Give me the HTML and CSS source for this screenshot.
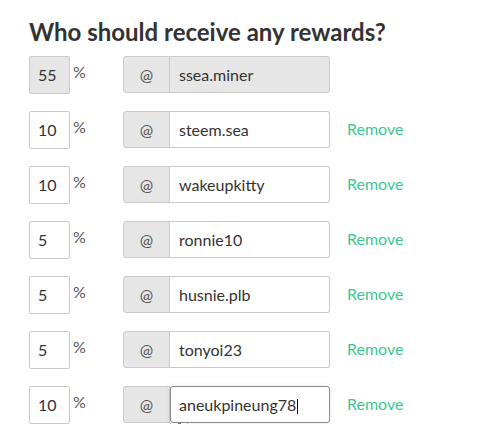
FILE: index.html
```html
<!DOCTYPE html>
<html>
<head>
<meta charset="utf-8">
<link rel="stylesheet" href="styles.css">
</head>
<body>
<div class="page">
  <h4 class="title">Who should receive any rewards?</h4>
  <div class="rows">
    <div class="row">
      <div class="pct disabled">55</div><span class="sign">%</span>
      <div class="group"><span class="addon">@</span><div class="name disabled">ssea.miner</div></div>
    </div>
    <div class="row">
      <div class="pct">10</div><span class="sign">%</span>
      <div class="group"><span class="addon">@</span><div class="name">steem.sea</div></div>
      <a class="remove">Remove</a>
    </div>
    <div class="row">
      <div class="pct">10</div><span class="sign">%</span>
      <div class="group"><span class="addon">@</span><div class="name">wakeupkitty</div></div>
      <a class="remove">Remove</a>
    </div>
    <div class="row">
      <div class="pct">5</div><span class="sign">%</span>
      <div class="group"><span class="addon">@</span><div class="name">ronnie10</div></div>
      <a class="remove">Remove</a>
    </div>
    <div class="row">
      <div class="pct">5</div><span class="sign">%</span>
      <div class="group"><span class="addon">@</span><div class="name">husnie.plb</div></div>
      <a class="remove">Remove</a>
    </div>
    <div class="row">
      <div class="pct">5</div><span class="sign">%</span>
      <div class="group"><span class="addon">@</span><div class="name">tonyoi23</div></div>
      <a class="remove">Remove</a>
    </div>
    <div class="row">
      <div class="pct">10</div><span class="sign">%</span>
      <div class="group"><span class="addon">@</span><div class="name focus">aneukpineung78<span class="caret"></span><span class="suggest"><span class="dot"></span></span></div></div>
      <a class="remove">Remove</a>
    </div>
  </div>
</div>
</body>
</html>
```
FILE: styles.css
```css
html, body {
  margin: 0;
  padding: 0;
  background: #fff;
}
.page {
  padding: 17px 0 0 29px;
  font-family: Lato, "Liberation Sans", sans-serif;
  color: #333;
}
.title {
  margin: 0 0 9px 0;
  font-size: 24px;
  line-height: 30px;
  font-weight: 700;
  color: #333;
}
.rows {
  display: flex;
  flex-direction: column;
  gap: 17px;
}
.row {
  display: flex;
  align-items: flex-start;
  height: 38px;
}
.pct {
  box-sizing: border-box;
  width: 41px;
  height: 38px;
  border: 1px solid #cacaca;
  border-radius: 2px;
  padding-left: 8px;
  font-size: 16px;
  line-height: 36px;
  color: #333;
  background: #fff;
}
.disabled {
  background: #e6e6e6;
}
.sign {
  width: 53px;
  padding-left: 3px;
  box-sizing: border-box;
  font-size: 16px;
  line-height: 16px;
  margin-top: 8px;
  color: #555;
}
.group {
  display: flex;
  height: 37px;
}
.addon {
  box-sizing: border-box;
  width: 47px;
  height: 37px;
  border: 1px solid #cacaca;
  border-radius: 3px 0 0 3px;
  background: #e6e6e6;
  text-align: center;
  font-size: 16px;
  line-height: 35px;
  color: #555;
}
.name {
  position: relative;
  box-sizing: border-box;
  width: 160px;
  height: 37px;
  border: 1px solid #cacaca;
  border-left: none;
  border-radius: 0 3px 3px 0;
  padding-left: 9px;
  font-size: 16px;
  line-height: 35px;
  color: #333;
  background: #fff;
}
.name.disabled {
  background: #e6e6e6;
}
.name.focus {
  border: 1px solid #8a8a8a;
  border-radius: 3px;
  padding-left: 8px;
  box-shadow: 0 0 6px rgba(0,0,0,0.08);
}
.caret {
  display: inline-block;
  width: 1px;
  height: 15px;
  background: #111;
  vertical-align: -3px;
  margin-left: 1px;
}
.suggest {
  position: absolute;
  left: -1px;
  top: 36px;
  width: 18px;
  height: 4px;
  box-sizing: border-box;
  border: 1px solid #bbb;
  border-top: none;
  background: #fff;
  box-shadow: 0 2px 8px rgba(0,0,0,0.08);
}
.dot {
  position: absolute;
  left: 7px;
  top: 0;
  width: 3px;
  height: 2px;
  background: #777;
}
.remove {
  margin-left: 17px;
  font-size: 16px;
  line-height: 35px;
  color: #3cc890;
  cursor: pointer;
}
```
